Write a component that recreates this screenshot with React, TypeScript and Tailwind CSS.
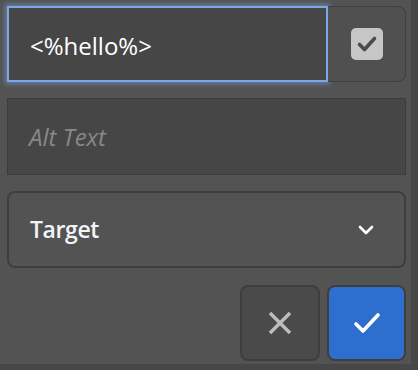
import { useState } from 'react';

export default function App() {
  const [text, setText] = useState('<%hello%>');
  const [checked, setChecked] = useState(true);

  return (
    <div className="w-[418px] h-[370px] bg-[#474747] font-['Open_Sans',sans-serif]">
      <div className="w-[411px] h-[364px] bg-[#535353] pt-[6px] pl-[7px] pr-[5px]">
        <div className="flex h-[76px]">
          <input
            value={text}
            onChange={(e) => setText(e.target.value)}
            className="w-[321px] h-full bg-[#464646] border-2 border-[#7aa8e6] shadow-[0_0_5px_2px_rgba(122,168,230,0.5)] pl-[21px] pt-[2px] text-[24px] text-white outline-none"
          />
          <button
            type="button"
            onClick={() => setChecked(!checked)}
            className="flex-1 h-full flex items-center justify-center border border-l-0 border-[#3f3f3f] rounded-r-lg bg-[#505050]"
          >
            <span className="w-[32px] h-[32px] rounded-[5px] bg-[#c6c6c6] flex items-center justify-center">
              {checked && (
                <svg width="22" height="22" viewBox="0 0 22 22" fill="none">
                  <path d="M3.5 11.5 L8.5 16.5 L18.5 5.5" stroke="#4b4b4b" strokeWidth="3.6" strokeLinecap="round" strokeLinejoin="round" />
                </svg>
              )}
            </span>
          </button>
        </div>

        <div className="mt-[16px] h-[77px] bg-[#464646] border border-[#3b3b3b] flex items-center pl-[21px]">
          <span className="text-[24px] italic text-[#888888]">Alt Text</span>
        </div>

        <div className="mt-[16px] h-[77px] rounded-lg border-2 border-[#3e3e3e] flex items-center justify-between pl-[21px] pr-[30px]">
          <span className="text-[23px] font-semibold text-[#f4f4f4] tracking-[-0.4px]">Target</span>
          <svg width="16" height="10" viewBox="0 0 16 10" fill="none">
            <path d="M2 2 L8 8 L14 2" stroke="white" strokeWidth="2.6" strokeLinecap="round" strokeLinejoin="round" />
          </svg>
        </div>

        <div className="mt-[17px] flex justify-end gap-[7px]">
          <button
            type="button"
            className="w-[80px] h-[76px] rounded-lg bg-[#4a4a4a] border-2 border-[#3e3e3e] flex items-center justify-center"
          >
            <svg width="26" height="26" viewBox="0 0 26 26" fill="none">
              <path d="M3 3 L23 23 M23 3 L3 23" stroke="#bdbdbd" strokeWidth="3.4" />
            </svg>
          </button>
          <button
            type="button"
            className="w-[79px] h-[76px] rounded-lg bg-[#2e6ecf] border-2 border-[#3e3e3e] flex items-center justify-center"
          >
            <svg width="28" height="24" viewBox="0 0 28 24" fill="none">
              <path d="M3 13 L10 20 L25 4" stroke="white" strokeWidth="3.6" strokeLinecap="round" strokeLinejoin="round" />
            </svg>
          </button>
        </div>
      </div>
    </div>
  );
}
